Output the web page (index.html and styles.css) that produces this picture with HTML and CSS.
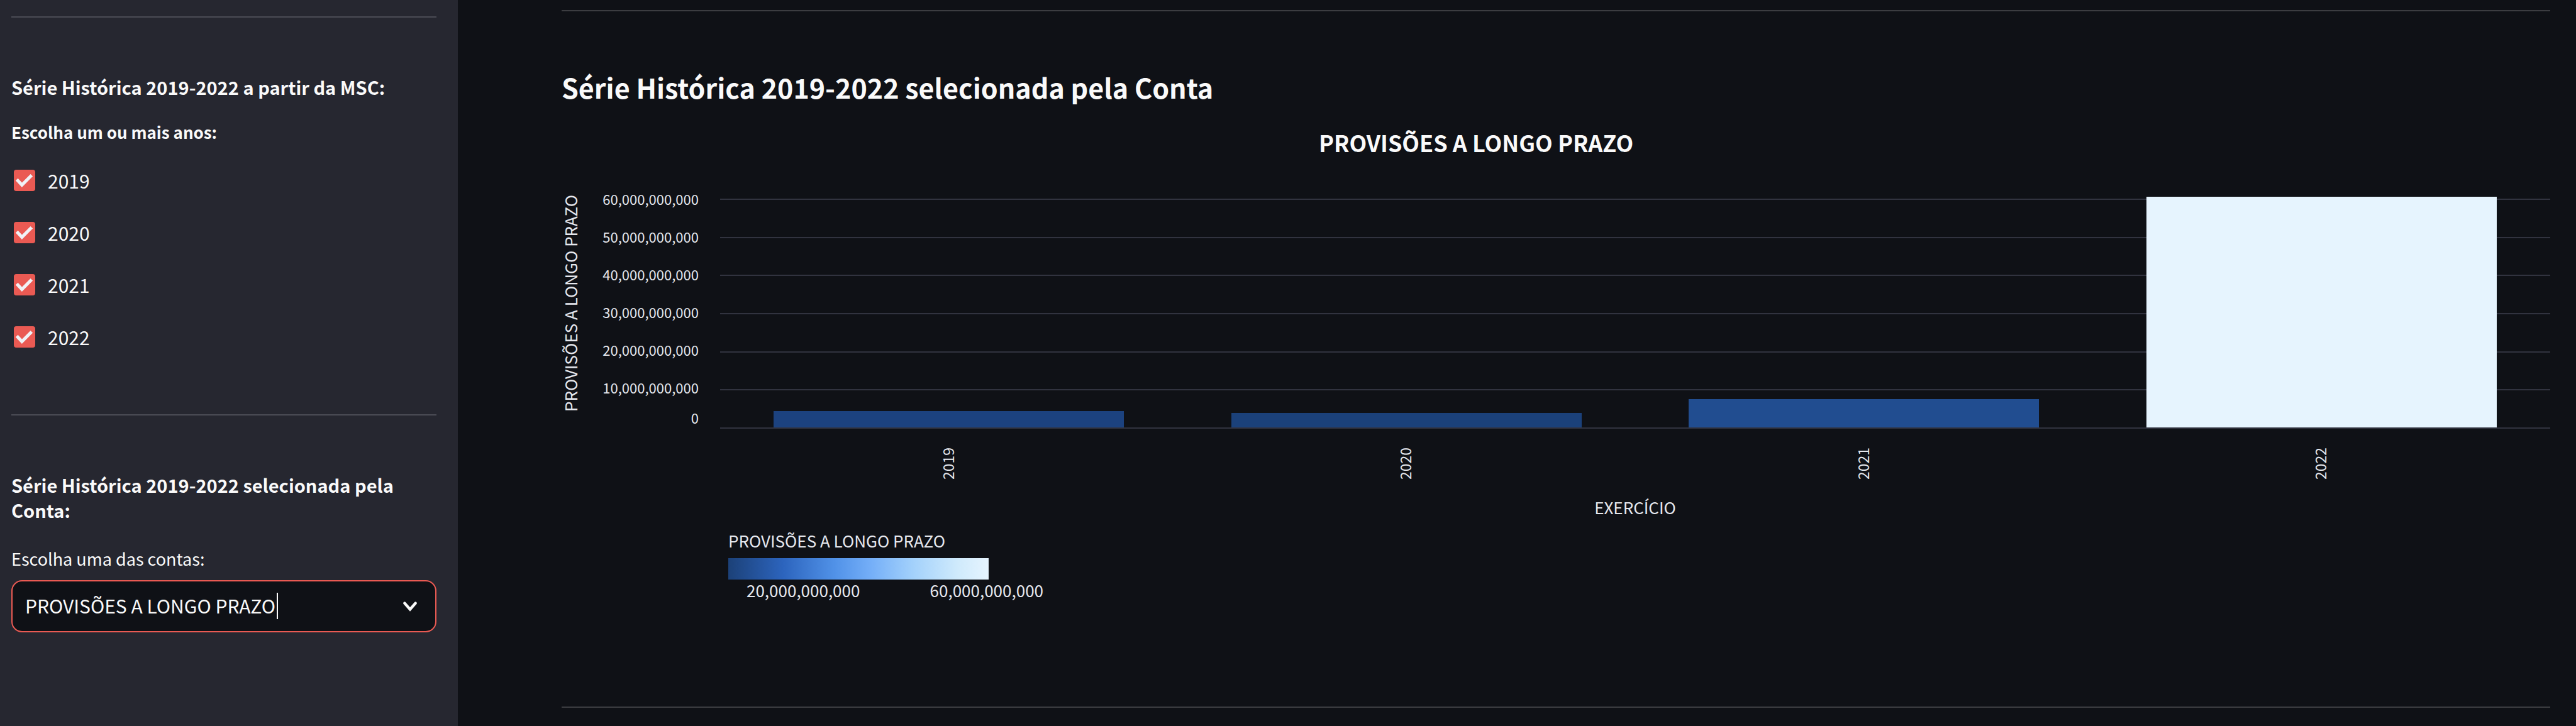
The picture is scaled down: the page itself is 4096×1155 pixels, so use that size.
FILE: index.html
```html
<!DOCTYPE html>
<html lang="pt-BR">
<head>
<meta charset="utf-8">
<title>Série Histórica 2019-2022</title>
<link rel="stylesheet" href="styles.css">
</head>
<body>
<div class="app">
  <aside class="sidebar">
    <hr class="rule">
    <h2 class="side-title">Série Histórica 2019-2022 a partir da MSC:</h2>
    <fieldset class="years">
      <legend class="years-legend">Escolha um ou mais anos:</legend>
      <label class="check"><span class="check-mark"><input class="check-box" type="checkbox" checked><svg class="check-icon" viewBox="0 0 33 33"><path d="M4.500 15l8 8.500L27.500 8.500"/></svg></span>2019</label>
      <label class="check"><span class="check-mark"><input class="check-box" type="checkbox" checked><svg class="check-icon" viewBox="0 0 33 33"><path d="M4.500 15l8 8.500L27.500 8.500"/></svg></span>2020</label>
      <label class="check"><span class="check-mark"><input class="check-box" type="checkbox" checked><svg class="check-icon" viewBox="0 0 33 33"><path d="M4.500 15l8 8.500L27.500 8.500"/></svg></span>2021</label>
      <label class="check"><span class="check-mark"><input class="check-box" type="checkbox" checked><svg class="check-icon" viewBox="0 0 33 33"><path d="M4.500 15l8 8.500L27.500 8.500"/></svg></span>2022</label>
    </fieldset>
    <hr class="rule rule-second">
    <h2 class="side-title">Série Histórica 2019-2022 selecionada pela Conta:</h2>
    <label class="select-label" for="conta">Escolha uma das contas:</label>
    <div class="select-wrap">
      <select class="select" id="conta"><option>PROVISÕES A LONGO PRAZO</option></select>
      <span class="caret"></span>
      <svg class="chevron" viewBox="0 0 22 16"><path d="M3 3l8 9 8-9"/></svg>
    </div>
  </aside>
  <main class="main">
    <hr class="rule rule-main">
    <h1 class="title">Série Histórica 2019-2022 selecionada pela Conta</h1>
    <figure class="chart">
      <figcaption class="chart-title">PROVISÕES A LONGO PRAZO</figcaption>
      <div class="chart-body">
        <div class="y-title"><span class="vertical">PROVISÕES A LONGO PRAZO</span></div>
        <div class="y-ticks">
          <span class="tick">60,000,000,000</span>
          <span class="tick">50,000,000,000</span>
          <span class="tick">40,000,000,000</span>
          <span class="tick">30,000,000,000</span>
          <span class="tick">20,000,000,000</span>
          <span class="tick">10,000,000,000</span>
          <span class="tick-zero">0</span>
        </div>
        <div class="plot">
          <div class="lines"><i></i><i></i><i></i><i></i><i></i><i></i></div>
          <div class="bars">
            <div class="band"><div class="bar bar-2019" style="height:7.2%"></div></div>
            <div class="band"><div class="bar bar-2020" style="height:6.3%"></div></div>
            <div class="band"><div class="bar bar-2021" style="height:12.5%"></div></div>
            <div class="band"><div class="bar bar-2022" style="height:101.4%"></div></div>
          </div>
        </div>
        <div class="x-axis">
          <div class="x-ticks">
            <span class="vertical">2019</span>
            <span class="vertical">2020</span>
            <span class="vertical">2021</span>
            <span class="vertical">2022</span>
          </div>
          <div class="x-title">EXERCÍCIO</div>
          <div class="legend">
            <div class="legend-title">PROVISÕES A LONGO PRAZO</div>
            <div class="ramp"></div>
            <div class="legend-ticks"><span>20,000,000,000</span><span>60,000,000,000</span></div>
          </div>
        </div>
      </div>
    </figure>
    <hr class="rule rule-main rule-last">
  </main>
</div>
</body>
</html>
```
FILE: styles.css
```css
* { box-sizing: border-box; }

body {
  margin: 0;
  background: #0f1116;
  color: #fafafa;
  font-family: "Noto Sans CJK SC", "Noto Sans", sans-serif;
  font-size: 30px;
  line-height: 40px;
}

.app { display: flex; min-height: 100vh; }

.sidebar {
  flex: 0 0 728px;
  padding: 26px 34px 0 18px;
  background: #262730;
}

.rule {
  height: 2px;
  margin: 0 0 90px;
  border: 0;
  background: #4b4c55;
}

.rule-second { margin-top: 106px; }

.side-title {
  margin: 0;
  font-size: 29px;
  font-weight: 700;
}

.years {
  display: flex;
  flex-direction: column;
  gap: 49px;
  margin: 32px 0 0;
  padding: 0 4px;
  border: 0;
}

.years-legend {
  margin: 0 0 40px -4px;
  padding: 0;
  font-size: 26px;
  font-weight: 700;
}

.check {
  display: flex;
  align-items: center;
  gap: 20px;
  height: 34px;
}

.check-mark { display: grid; width: 34px; height: 34px; }

.check-box {
  grid-area: 1 / 1;
  width: 34px;
  height: 34px;
  margin: 0;
  appearance: none;
  border-radius: 4px;
  background: #ea5a53;
}

.check-icon {
  grid-area: 1 / 1;
  fill: none;
  stroke: #f0f2f6;
  stroke-width: 5;
  pointer-events: none;
}

.select-label {
  display: block;
  margin: 38px 0 14px;
  font-size: 27px;
}

.select-wrap { position: relative; }

.select {
  width: 100%;
  height: 83px;
  padding: 0 20px 3px;
  appearance: none;
  border: 2px solid #ea5a53;
  border-radius: 17px;
  background: #0f1116;
  color: #fafafa;
  font: inherit;
}

.caret {
  position: absolute;
  top: 20px;
  left: 422px;
  width: 2px;
  height: 42px;
  background: #fafafa;
}

.chevron {
  position: absolute;
  top: 33px;
  right: 30px;
  width: 24px;
  height: 18px;
  fill: none;
  stroke: #fafafa;
  stroke-width: 4;
  stroke-linecap: round;
}

.main {
  flex: 1;
  min-width: 0;
  padding: 16px 41px 0 165px;
}

.rule-main { margin-bottom: 92px; background: #3c3d41; }

.title {
  margin: 0;
  font-size: 43px;
  font-weight: 700;
  line-height: 56px;
}

.chart { margin: 36px 0 0; color: #e6e8ee; }

.chart-title {
  padding-right: 254px;
  color: #fafafa;
  font-size: 36px;
  font-weight: 700;
  line-height: 48px;
  text-align: center;
}

.chart-body {
  display: grid;
  grid-template-columns: 38px 180px 1fr;
  margin-top: 36px;
}

.vertical {
  writing-mode: vertical-rl;
  transform: rotate(180deg);
}

.y-title {
  padding-top: 24px;
  font-size: 26px;
  line-height: 28px;
}

.y-ticks {
  display: flex;
  flex-direction: column;
  font-size: 22px;
  text-align: right;
}

.tick { flex: 1; line-height: 60px; }

.tick-zero { line-height: 36px; }

.plot {
  display: grid;
  height: 366px;
  margin: 30px 0 0 34px;
  border-top: 2px solid #31333f;
}

.lines {
  display: grid;
  grid-area: 1 / 1;
  grid-template-rows: repeat(6, 1fr);
}

.lines i { border-bottom: 2px solid #31333f; }

.bars {
  display: grid;
  grid-area: 1 / 1;
  grid-template-columns: repeat(4, 1fr);
  height: 362px;
}

.band {
  display: flex;
  align-items: flex-end;
  justify-content: center;
}

.bar { width: 557px; max-width: 77%; }
.bar-2019 { background: #1c427f; }
.bar-2020 { background: #1b417a; }
.bar-2021 { background: #214d90; }
.bar-2022 { background: #e6f4fe; }

.x-axis { grid-column: 3; margin-left: 34px; }

.x-ticks {
  display: grid;
  grid-template-columns: repeat(4, 1fr);
  justify-items: center;
  margin-top: 30px;
  font-size: 23px;
  line-height: 34px;
}

.x-ticks .vertical { padding-left: 4px; }

.x-title {
  margin-top: 24px;
  font-size: 26px;
  text-align: center;
}

.legend {
  width: 520px;
  margin: 13px 0 0 13px;
  font-size: 26px;
}

.ramp {
  width: 414px;
  height: 34px;
  margin-top: 8px;
  background: linear-gradient(90deg, #1c4178, #2c64bd 21%, #5192e8 41%, #75aff8 55%, #a3d1fb 71%, #cfeafc 88%, #e6f4fe);
}

.legend-ticks {
  display: flex;
  justify-content: space-between;
  padding: 0 19px 0 29px;
  line-height: 34px;
}

.rule-last { margin: 168px 0 0; }
```
